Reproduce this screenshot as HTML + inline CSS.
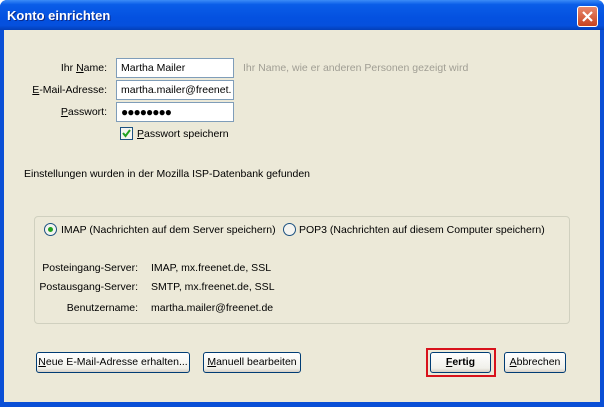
<!DOCTYPE html>
<html><head><style>
body{margin:0;width:604px;height:407px;overflow:hidden;background:#fff;font-family:"Liberation Sans",sans-serif;font-size:10.5px;color:#000}
.win{position:absolute;left:0;top:0;width:604px;height:407px;background:#0A4FD6;border-radius:7px 7px 0 0}
.tb{position:absolute;left:0;top:0;width:604px;height:30px;border-radius:7px 7px 0 0;background:linear-gradient(#3C8CF7 0%,#0A5DE8 15%,#0451E0 60%,#0550DD 85%,#033FB8 100%)}
.tt{position:absolute;left:7px;top:8px;color:#fff;font-weight:bold;font-size:13px;text-shadow:1px 1px #0A2A8A}
.cl{position:absolute;left:577px;top:6px;width:19px;height:19px;border:1px solid #fff;border-radius:3px;background:linear-gradient(#E8876C,#C8431F)}
.body{position:absolute;left:4px;top:30px;width:596px;height:372px;background:#ECE9D8}
.a{position:absolute;white-space:nowrap}
.in{position:absolute;background:#fff;border:1px solid #7F9DB9;line-height:18px;padding-left:4px;box-sizing:border-box;overflow:hidden;white-space:nowrap}
.r{text-align:right}
.btn{position:absolute;height:21px;box-sizing:border-box;border:1px solid #003C74;border-radius:3px;background:linear-gradient(#fff,#F0F0EA 80%,#D6D0C5);text-align:center;line-height:19px;white-space:nowrap;overflow:hidden}
u{text-decoration:underline}
</style></head><body>
<div class="win"><div class="tb"><div class="tt">Konto einrichten</div>
<div class="cl"><svg width="19" height="19"><path d="M5 5L14 14M14 5L5 14" stroke="#fff" stroke-width="2.2"/></svg></div></div>
<div class="body"></div></div>
<div class="a r" style="left:20px;width:87px;top:62px">Ihr <u>N</u>ame:</div>
<div class="in" style="left:116px;top:58px;width:118px;height:20px">Martha Mailer</div>
<div class="a" style="left:243px;top:62px;color:#A09E94">Ihr Name, wie er anderen Personen gezeigt wird</div>
<div class="a r" style="left:10px;width:97px;top:84px"><u>E</u>-Mail-Adresse:</div>
<div class="in" style="left:116px;top:80px;width:118px;height:20px">martha.mailer@freenet.</div>
<div class="a r" style="left:20px;width:87px;top:106px"><u>P</u>asswort:</div>
<div class="in" style="left:116px;top:102px;width:118px;height:20px;font-size:12px;letter-spacing:-1px">●●●●●●●●</div>
<div class="a" style="left:120px;top:127px;width:11px;height:11px;border:1px solid #1C5180;background:#F4F4F0"><svg width="11" height="11"><path d="M2 5L4.5 8L9 2" stroke="#21A121" stroke-width="2" fill="none"/></svg></div>
<div class="a" style="left:137px;top:128px"><u>P</u>asswort speichern</div>
<div class="a" style="left:24px;top:168px">Einstellungen wurden in der Mozilla ISP-Datenbank gefunden</div>
<div class="a" style="left:34px;top:216px;width:534px;height:106px;border:1px solid #D0D0BF;border-radius:4px"></div>
<div class="a" style="left:44px;top:223px;width:11px;height:11px;border:1px solid #1C5180;border-radius:50%;background:#F4F4F0"><div style="position:absolute;left:3px;top:3px;width:5px;height:5px;border-radius:50%;background:#21A121"></div></div>
<div class="a" style="left:61px;top:224px">IMAP (Nachrichten auf dem Server speichern)</div>
<div class="a" style="left:283px;top:223px;width:11px;height:11px;border:1px solid #1C5180;border-radius:50%;background:#F4F4F0"></div>
<div class="a" style="left:299px;top:224px">POP3 (Nachrichten auf diesem Computer speichern)</div>
<div class="a r" style="left:20px;width:118px;top:262px">Posteingang-Server:</div>
<div class="a" style="left:151px;top:262px">IMAP, mx.freenet.de, SSL</div>
<div class="a r" style="left:20px;width:118px;top:281px">Postausgang-Server:</div>
<div class="a" style="left:151px;top:281px">SMTP, mx.freenet.de, SSL</div>
<div class="a r" style="left:20px;width:118px;top:302px">Benutzername:</div>
<div class="a" style="left:151px;top:302px">martha.mailer@freenet.de</div>
<div class="btn" style="left:36px;top:352px;width:154px"><u>N</u>eue E-Mail-Adresse erhalten...</div>
<div class="btn" style="left:203px;top:352px;width:98px"><u>M</u>anuell bearbeiten</div>
<div class="a" style="left:426px;top:348px;width:66px;height:25px;border:2px solid #D8121B"></div>
<div class="btn" style="left:430px;top:352px;width:61px;font-weight:bold"><u>F</u>ertig</div>
<div class="btn" style="left:504px;top:352px;width:62px"><u>A</u>bbrechen</div>
</body></html>
